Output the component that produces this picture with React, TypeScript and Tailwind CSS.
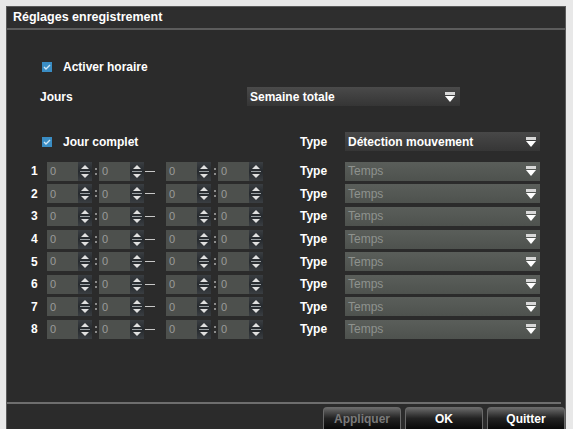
import React from "react";

const font = { fontFamily: '"Liberation Sans", Arial, sans-serif' };

function Arrow() {
  return (
    <svg width="12" height="12" viewBox="0 0 12 12" className="shrink-0">
      <rect x="1" y="1" width="10" height="3" fill="#d8d8d8" />
      <path d="M1 5 L11 5 L6 11 Z" fill="#ffffff" />
    </svg>
  );
}

function Check() {
  return (
    <div className="w-[10px] h-[10px] bg-[#3a8dc4] flex items-center justify-center shrink-0">
      <svg width="8" height="8" viewBox="0 0 8 8">
        <path d="M1 4 L3 6 L7 2" stroke="#cfe6f5" strokeWidth="1.4" fill="none" />
      </svg>
    </div>
  );
}

function Spinner() {
  return (
    <div className="w-[14px] h-[19px] bg-gradient-to-b from-[#3a3e42] via-[#262a2e] to-[#3a3e42] flex items-center justify-center">
      <svg width="12" height="17" viewBox="0 0 12 17">
        <path d="M2 6 L6 2 L10 6 Z" fill="#e0e0e0" />
        <rect x="1" y="8" width="10" height="1" fill="#9aa0a4" />
        <path d="M2 11 L10 11 L6 15 Z" fill="#e0e0e0" />
      </svg>
    </div>
  );
}

function Field({ w = 31 }: { w?: number }) {
  return (
    <div className="flex items-center">
      <div
        className="h-[19px] bg-[#4d504d] text-[#9a9c9a] text-[11px] flex items-center pl-[3px]"
        style={{ width: w }}
      >
        0
      </div>
      <Spinner />
    </div>
  );
}

function Colon() {
  return (
    <div className="w-[7px] flex flex-col items-center gap-[3px]">
      <div className="w-[2px] h-[2px] bg-[#8a8a8a]" />
      <div className="w-[2px] h-[2px] bg-[#8a8a8a]" />
    </div>
  );
}

function Row({ n }: { n: number }) {
  return (
    <div className="h-[22.6px] flex items-center pl-[24px]">
      <div className="w-[16px] text-white font-bold text-[12px]">{n}</div>
      <Field />
      <Colon />
      <Field />
      <div className="w-[22px] flex items-center">
        <div className="ml-[1px] w-[10px] h-[1px] bg-[#c8c8c8]" />
      </div>
      <Field />
      <Colon />
      <Field />
      <div className="w-[37px]" />
      <div className="w-[45px] text-white font-bold text-[12px]">Type</div>
      <div className="w-[195px] h-[19px] bg-gradient-to-b from-[#5a5e5a] to-[#4e524e] flex items-center justify-between pl-[3px] pr-[3px]">
        <span className="text-[#8e928e] text-[12px]">Temps</span>
        <Arrow />
      </div>
    </div>
  );
}

function Btn({ label, disabled }: { label: string; disabled?: boolean }) {
  return (
    <div
      className={
        "w-[78px] h-[22px] rounded-t-[4px] border border-[#6a6a6a] border-b-0 bg-gradient-to-b from-[#6a6a6a] via-[#222] to-[#0a0a0a] flex items-center justify-center font-bold text-[12px] " +
        (disabled ? "text-[#7a7a7a]" : "text-white")
      }
    >
      {label}
    </div>
  );
}

export default function App() {
  return (
    <div className="w-[573px] h-[429px] bg-[#e8e8e8] pt-[6px] pl-[6px] pr-[7px] overflow-hidden" style={font}>
      <div className="w-[560px] h-[423px] bg-[#2b2b2b] border-l border-t border-r border-[#5a5a5a] flex flex-col">
        <div className="h-[23px] flex items-center pl-[6px] text-white font-bold text-[12.5px] border-b-2 border-[#5c5c5c] bg-[#2e2e2e]">
          Réglages enregistrement
        </div>
        <div className="flex-1 flex flex-col">
          <div className="h-[28px]" />
          <div className="h-[18px] flex items-center pl-[35px] gap-[11px]">
            <Check />
            <span className="text-white font-bold text-[12px]">Activer horaire</span>
          </div>
          <div className="h-[11px]" />
          <div className="h-[19px] flex items-center">
            <div className="w-[240px] pl-[33px] text-white font-bold text-[12px]">Jours</div>
            <div className="w-[213px] h-[19px] bg-gradient-to-b from-[#4a4a4a] to-[#353535] flex items-center justify-between pl-[3px] pr-[4px]">
              <span className="text-white font-bold text-[12px]">Semaine totale</span>
              <Arrow />
            </div>
          </div>
          <div className="h-[26px]" />
          <div className="h-[19px] flex items-center">
            <div className="w-[293px] pl-[35px] flex items-center gap-[11px]">
              <Check />
              <span className="text-white font-bold text-[12px]">Jour complet</span>
            </div>
            <div className="w-[45px] text-white font-bold text-[12px]">Type</div>
            <div className="w-[195px] h-[19px] bg-gradient-to-b from-[#484848] to-[#363636] flex items-center justify-between pl-[3px] pr-[3px]">
              <span className="text-white font-bold text-[12px]">Détection mouvement</span>
              <Arrow />
            </div>
          </div>
          <div className="h-[9px]" />
          <div className="flex flex-col">
            {[1, 2, 3, 4, 5, 6, 7, 8].map((n) => (
              <Row key={n} n={n} />
            ))}
          </div>
          <div className="flex-1" />
          <div className="h-[2px] bg-[#6e6e6e] mr-[4px]" />
          <div className="h-[3px]" />
          <div className="flex justify-end gap-[4px] pr-[0px]">
            <Btn label="Appliquer" disabled />
            <Btn label="OK" />
            <Btn label="Quitter" />
          </div>
        </div>
      </div>
    </div>
  );
}
